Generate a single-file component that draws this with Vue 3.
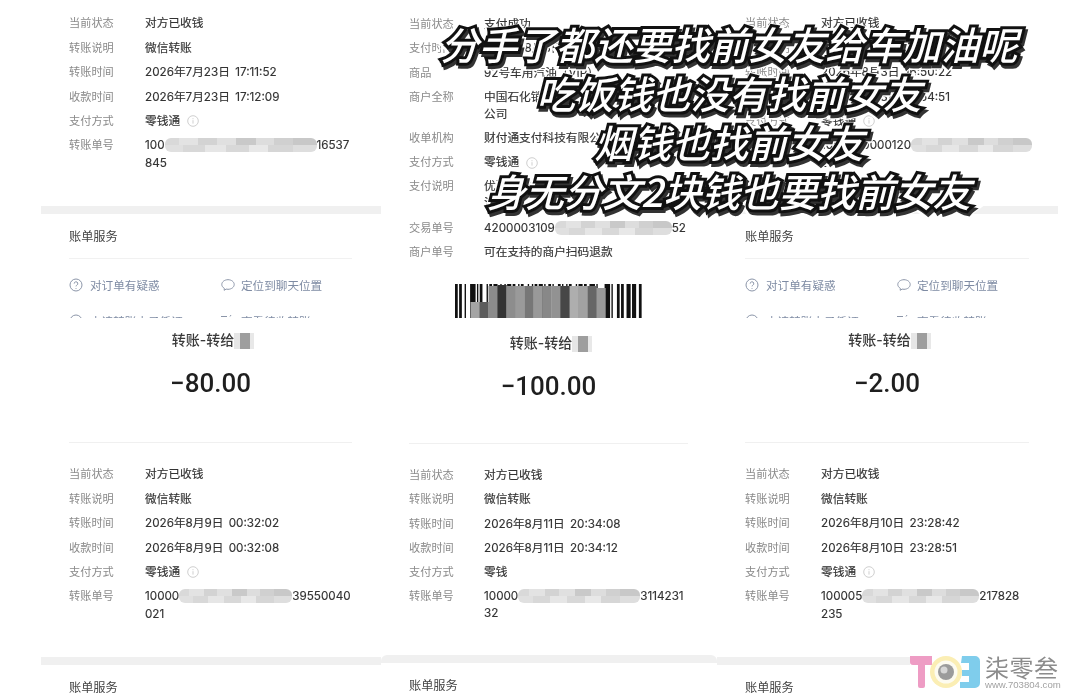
<script setup>
const top = [
  {
    cls: 'top', rows: [
      { k: '当前状态', v: '对方已收钱' },
      { k: '转账说明', v: '微信转账' },
      { k: '转账时间', v: '2026年7月23日 17:11:52' },
      { k: '收款时间', v: '2026年7月23日 17:12:09' },
      { k: '支付方式', v: '零钱通', info: true },
      { k: '转账单号', a: '100', m: 152, b: '16537', next: '845' }
    ]
  },
  {
    cls: 'top tight mid', rows: [
      { k: '当前状态', v: '支付成功' },
      { k: '支付时间', v: '2026年8月3日 16:48:10' },
      { k: '商品', v: '92号车用汽油（VIP）' },
      { k: '商户全称', v: '中国石化销售股份有限公司山东石油分', next: '公司' },
      { k: '收单机构', v: '财付通支付科技有限公司' },
      { k: '支付方式', v: '零钱通', info: true },
      { k: '支付说明', v: '优惠立减', next: '活动' },
      { k: '交易单号', a: '4200003109', m: 117, b: '52' },
      { k: '商户单号', v: '可在支持的商户扫码退款' }
    ]
  },
  {
    cls: 'top', rows: [
      { k: '当前状态', v: '对方已收钱' },
      { k: '转账说明', v: '微信转账' },
      { k: '转账时间', v: '2026年8月3日 16:50:22' },
      { k: '收款时间', v: '2026年8月3日 16:54:51' },
      { k: '支付方式', v: '零钱通', info: true },
      { k: '转账单号', a: '1000050000120', m: 121, b: '', next: '235' }
    ]
  }
]

const bottom = [
  {
    cls: '', amount: '−80.00', rows: [
      { k: '当前状态', v: '对方已收钱' },
      { k: '转账说明', v: '微信转账' },
      { k: '转账时间', v: '2026年8月9日 00:32:02' },
      { k: '收款时间', v: '2026年8月9日 00:32:08' },
      { k: '支付方式', v: '零钱通', info: true },
      { k: '转账单号', a: '10000', m: 113, b: '39550040', next: '021' }
    ]
  },
  {
    cls: 'tight mid', amount: '−100.00', rows: [
      { k: '当前状态', v: '对方已收钱' },
      { k: '转账说明', v: '微信转账' },
      { k: '转账时间', v: '2026年8月11日 20:34:08' },
      { k: '收款时间', v: '2026年8月11日 20:34:12' },
      { k: '支付方式', v: '零钱' },
      { k: '转账单号', a: '10000', m: 122, b: '3114231', next: '32' }
    ]
  },
  {
    cls: '', amount: '−2.00', rows: [
      { k: '当前状态', v: '对方已收钱' },
      { k: '转账说明', v: '微信转账' },
      { k: '转账时间', v: '2026年8月10日 23:28:42' },
      { k: '收款时间', v: '2026年8月10日 23:28:51' },
      { k: '支付方式', v: '零钱通', info: true },
      { k: '转账单号', a: '100005', m: 117, b: '217828', next: '235' }
    ]
  }
]

const captions = ['分手了都还要找前女友给车加油呢', '吃饭钱也没有找前女友', '烟钱也找前女友', '身无分文2块钱也要找前女友']

// barcode bars: [x, width]
const seq = [2,1,2,2,1,3,4,1,1,1,2,3,1,1,2,1,3,2,1,2,1,1,3,1,2,2,1,1,2,3,1,2,1,1,2,1,3,1,1,2,2,1,1,3,2,1,1,2,1,1,2,3,1,1,3,1,2,2,4,1,1,5,4,1,1,3,2,1,2,2,3,1,3,2,2,1]
let cursor = 0
const bars = []
seq.forEach((w, i) => {
  if (i % 2 === 0) bars.push({ x: cursor, w })
  cursor += w
})
const scale = 188 / cursor
const tiles = [
  { x: 15.5, y: 18, c: '#a4a4a4' }, { x: 24.5, y: 18, c: '#5c5c5c' }, { x: 33.5, y: 2, c: '#8b8b8b' },
  { x: 42.5, y: 1, c: '#333333' }, { x: 51.5, y: 2, c: '#8d8d8d' }, { x: 60.5, y: 2, c: '#9a9a9a' },
  { x: 69.5, y: 2, c: '#777777' }, { x: 78.5, y: 2, c: '#999999' }, { x: 87.5, y: 2, c: '#888888' },
  { x: 96.5, y: 2, c: '#929292' }, { x: 105.5, y: 2, c: '#474747' }, { x: 114.5, y: 2, c: '#aeaeae' },
  { x: 123.5, y: 2, c: '#a2a2a2' }, { x: 132.5, y: 2, c: '#666666' }, { x: 141.5, y: 4, c: '#999999' }
]
</script>

<template>
  <div class="page">
    <div class="sheet">
      <!-- top row -->
      <section v-for="(cell, i) in top" :key="'t' + i" class="cell" :class="cell.cls">
        <div class="rows">
          <div v-for="r in cell.rows" :key="r.k" class="row">
            <span class="k">{{ r.k }}</span>
            <span class="v">
              <template v-if="r.a">{{ r.a }}<i class="mask" :style="{ width: r.m + 'px' }"></i>{{ r.b }}</template>
              <template v-else>{{ r.v }}</template>
              <svg v-if="r.info" class="info" viewBox="0 0 12 12" width="12" height="12">
                <circle cx="6" cy="6" r="5.3" fill="none" stroke="#c9c9c9" stroke-width=".9" />
                <path d="M6 5.2v3.4M6 3.2v1" stroke="#c9c9c9" stroke-width=".9" fill="none" />
              </svg>
              <template v-if="r.next"><br />{{ r.next }}</template>
            </span>
          </div>
        </div>

        <template v-if="i !== 1">
          <div class="band"></div>
          <h3 class="service">账单服务</h3>
          <div class="links">
            <div class="link">
              <svg viewBox="0 0 14 14" width="14" height="14">
                <circle cx="7" cy="7" r="6" fill="none" stroke="#8b95a8" stroke-width="1" />
                <path d="M5.2 5.6a1.8 1.8 0 1 1 2.6 1.6c-.6.3-.8.6-.8 1.2M7 10v.8" fill="none" stroke="#8b95a8" stroke-width="1" />
              </svg>
              <span>对订单有疑惑</span>
            </div>
            <div class="link">
              <svg viewBox="0 0 14 14" width="14" height="14">
                <path d="M7 1.700c3.400 0 6.200 2.100 6.200 4.800S10.400 11.300 7 11.300c-.7 0-1.300-.1-1.900-.2L3.200 12.300l.1-2C1.800 9.400.8 8.100.8 6.500.8 3.800 3.600 1.700 7 1.700z" fill="none" stroke="#8b95a8" stroke-width="1" />
              </svg>
              <span>定位到聊天位置</span>
            </div>
            <div class="link">
              <svg viewBox="0 0 14 14" width="14" height="14">
                <circle cx="7" cy="7" r="6" fill="none" stroke="#8b95a8" stroke-width="1" />
              </svg>
              <span>申请转账电子凭证</span>
            </div>
            <div class="link">
              <svg viewBox="0 0 14 14" width="14" height="14">
                <path d="M-5 2.500h11M9 2.500l1-1.500" stroke="#8b95a8" stroke-width="1" fill="none" />
              </svg>
              <span>查看待收转账</span>
            </div>
          </div>
        </template>

        <svg v-else class="barcode" viewBox="0 0 188 36" width="188" height="36">
          <rect v-for="(b, n) in bars" :key="n" :x="b.x * scale" y="0" :width="b.w * scale" height="34" fill="#111" />
          <rect v-for="t in tiles" :key="t.x" :x="t.x" :y="t.y" width="9.2" :height="34 - t.y" :fill="t.c" />
        </svg>
      </section>

      <!-- bottom row -->
      <section v-for="(cell, i) in bottom" :key="'b' + i" class="cell lower" :class="cell.cls">
        <div class="title">转账-转给<i class="name"></i></div>
        <div class="amount">{{ cell.amount }}</div>
        <div class="rule"></div>
        <div class="rows">
          <div v-for="r in cell.rows" :key="r.k" class="row">
            <span class="k">{{ r.k }}</span>
            <span class="v">
              <template v-if="r.a">{{ r.a }}<i class="mask" :style="{ width: r.m + 'px' }"></i>{{ r.b }}</template>
              <template v-else>{{ r.v }}</template>
              <svg v-if="r.info" class="info" viewBox="0 0 12 12" width="12" height="12">
                <circle cx="6" cy="6" r="5.3" fill="none" stroke="#c9c9c9" stroke-width=".9" />
                <path d="M6 5.2v3.4M6 3.2v1" stroke="#c9c9c9" stroke-width=".9" fill="none" />
              </svg>
              <template v-if="r.next"><br />{{ r.next }}</template>
            </span>
          </div>
        </div>
        <div class="band"></div>
        <h3 class="service">账单服务</h3>
      </section>
    </div>

    <div class="caption">
      <div v-for="c in captions" :key="c" class="cap-line" :data-text="c">{{ c }}</div>
    </div>

    <div class="logo">
      <svg class="logo-mark" viewBox="0 0 70 34" width="70" height="34">
        <path d="M0 1h22v9h-7v21a2 2 0 0 1-2 2H10a2 2 0 0 1-2-2V10H3a3 3 0 0 1-3-3z" fill="#ee9cc4" />
        <path d="M52 1h13a5 5 0 0 1 5 5v22a5 5 0 0 1-5 5H50v-6h9v-6h-7v-6h7V8h-8z" fill="#7fcdec" />
        <circle cx="36" cy="17" r="16" fill="#fbeeb4" />
        <circle cx="36" cy="17" r="11.500" fill="#fdfbf0" />
        <circle cx="36" cy="17" r="8" fill="#9b9b9b" />
        <circle cx="34" cy="15" r="3.500" fill="#d6d6d6" />
      </svg>
      <div class="logo-text">
        <div class="logo-name">柒零叁</div>
        <div class="logo-url">www.703804.com</div>
      </div>
    </div>
  </div>
</template>

<style>
html, body { margin: 0; background: #fff; }
</style>

<style scoped>
.page {
  position: relative;
  width: 1080px;
  height: 700px;
  overflow: hidden;
  background: #fff;
  font-family: Inter, "Noto Sans CJK SC", "Noto Sans", sans-serif;
}
.sheet {
  display: grid;
  grid-template-columns: 340px 336px 341px;
  grid-template-rows: 318px 382px;
  padding-left: 41px;
  filter: blur(0.5px);
}
.cell {
  --line: 17.7px;
  --pad: 3.35px;
  padding: 0 29px 0 28px;
  overflow: hidden;
  min-width: 0;
}
.cell.tight { --line: 17.3px; --pad: 3.4px; }
.cell.top { padding-top: 11px; }
.cell.top.mid { padding-top: 12px; }
.cell.lower { padding-top: 12px; }
.cell.lower.mid { padding-top: 15px; }

.row {
  display: flex;
  padding: calc(var(--pad) + 1px) 0 calc(var(--pad) - 1px);
  font-size: 11.2px;
  line-height: var(--line);
}
.k { width: 76px; flex: none; color: #8a8a8a; }
.mid .k { width: 75px; }
.v {
  color: #333;
  font-size: 11.7px;
  word-spacing: 2px;
  white-space: nowrap;
  -webkit-text-stroke: 0.15px #333;
}
.info { margin-left: 7px; vertical-align: -2.5px; }
.mask {
  display: inline-block;
  height: 14px;
  vertical-align: -3px;
  border-radius: 6px;
  background:
    linear-gradient(90deg, #d9d9d9 0 9%, #e3e3e3 9% 22%, #d3d3d3 22% 34%, #e0e0e0 34% 47%, #c9c9c9 47% 60%, #dddddd 60% 72%, #d0d0d0 72% 84%, #c8c8c8 84% 100%) top / 100% 50% no-repeat,
    linear-gradient(90deg, #e0e0e0 0 12%, #d8d8d8 12% 26%, #e6e6e6 26% 40%, #d8d8d8 40% 55%, #e8e8e8 55% 68%, #d6d6d6 68% 84%, #dedede 84% 100%) bottom / 100% 50% no-repeat;
  filter: blur(0.6px);
}
.band {
  height: 8px;
  margin: 31px -29px 0 -28px;
  background: #f0f0f0;
}
.mid .band {
  margin-top: 30px;
  border-radius: 6px 6px 0 0;
}
.service {
  margin: 12px 0 0;
  height: 20px;
  font-size: 12.2px;
  line-height: 22px;
  font-weight: 400;
  color: #444;
}
.links {
  display: grid;
  grid-template-columns: 152px 1fr;
  row-gap: 16px;
  margin-top: 12px;
  padding-top: 16px;
  border-top: 1px solid #f1f1f1;
}
.link {
  display: flex;
  align-items: center;
  height: 20px;
  font-size: 11.600px;
  color: #7e8ba3;
}
.link span { margin-left: 7px; }
.link:nth-child(even) span { margin-left: 6px; }
.barcode {
  display: block;
  margin: 21px 0 0 46px;
}
.title {
  height: 20px;
  padding-left: 5px;
  line-height: 20px;
  text-align: center;
  font-size: 14px;
  font-weight: 500;
  color: #3a3a3a;
}
.name {
  display: inline-block;
  width: 20px;
  height: 16px;
  vertical-align: -4px;
  background: linear-gradient(90deg, #e6e6e6 0 30%, #9e9e9e 30% 80%, #e8e8e8 80%);
}
.amount {
  margin-top: 15px;
  height: 36px;
  line-height: 37px;
  text-align: center;
  font-family: Roboto, "Noto Sans", sans-serif;
  font-size: 26px;
  font-weight: 500;
  color: #1f1f1f;
}
.rule {
  margin-top: 41px;
  height: 1px;
  background: #f0f0f0;
}
.lower.mid .rule { margin-top: 39px; }
.lower .rows { margin-top: 19px; }

.caption {
  position: absolute;
  left: 429px;
  top: 19px;
  width: 600px;
  text-align: center;
  font-size: 38.500px;
  line-height: 49px;
  font-style: italic;
  font-weight: 500;
  font-family: "Noto Sans CJK SC", sans-serif;
  isolation: isolate;
  filter: blur(0.4px);
}
.cap-line {
  position: relative;
  white-space: nowrap;
  color: #fff;
  -webkit-text-stroke: 6px #111;
  paint-order: stroke fill;
}
.cap-line::before,
.cap-line::after {
  content: attr(data-text);
  position: absolute;
  inset: 0;
}
.cap-line::before {
  z-index: -2;
  transform: translate(1px, 2px);
  -webkit-text-stroke: 11px #fff;
}
.cap-line::after {
  z-index: -1;
  transform: translate(2px, 3px);
  color: #333;
  -webkit-text-stroke: 6px #333;
}

.logo {
  position: absolute;
  left: 910px;
  top: 655px;
  width: 148px;
  height: 34px;
  display: flex;
  background: #fff;
  filter: blur(0.35px);
}
.logo-mark { flex: none; }
.logo-text { margin-left: 5px; color: #8f8f8f; }
.logo-name {
  font-family: "Noto Sans CJK SC", sans-serif;
  font-size: 24px;
  line-height: 24px;
  letter-spacing: 0.5px;
  color: #8c8c8c;
}
.logo-url {
  margin-top: 1px;
  font-family: "Liberation Sans", sans-serif;
  font-size: 9.600px;
  line-height: 10px;
  color: #a2a2a2;
}
</style>
